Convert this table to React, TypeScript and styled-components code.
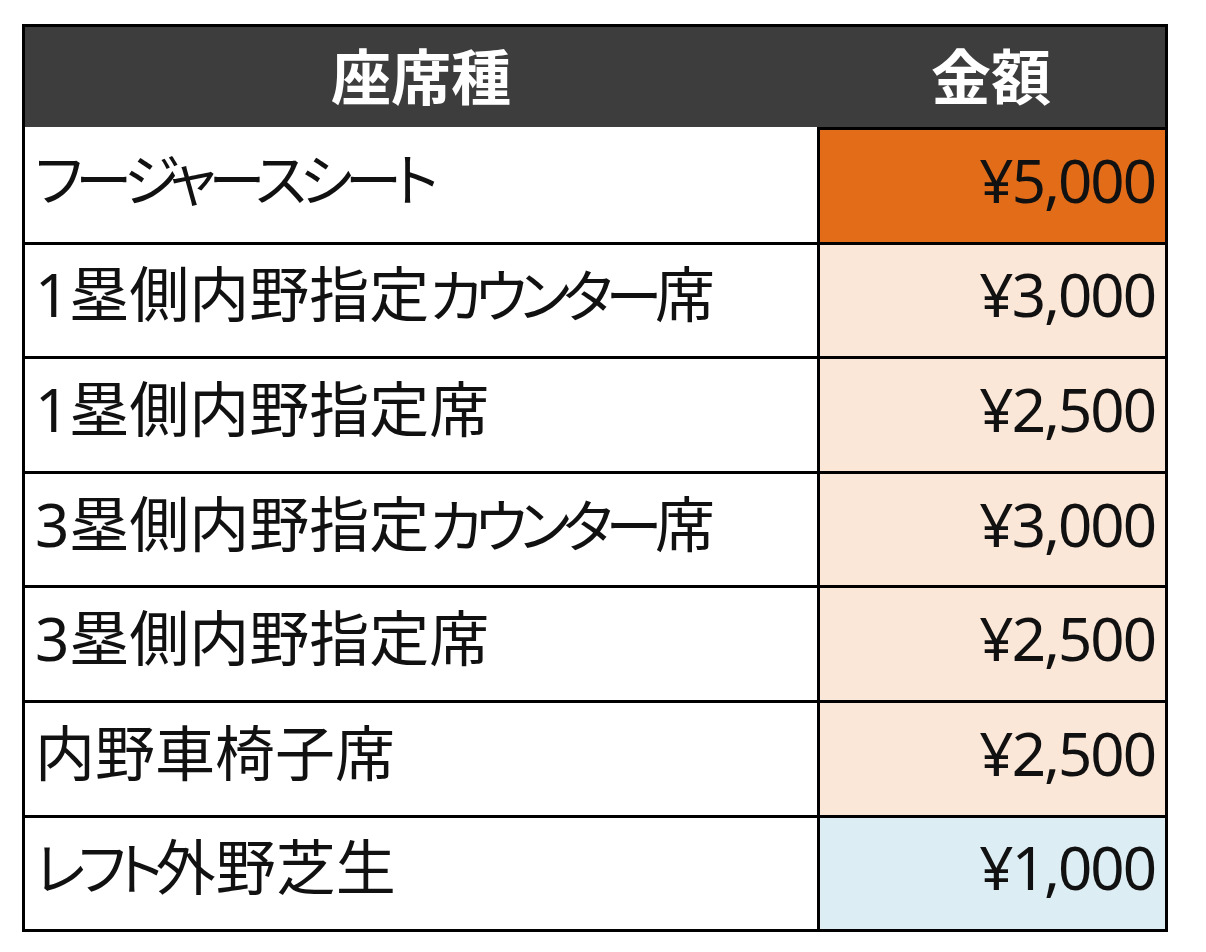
import React from 'react';
import styled, { createGlobalStyle } from 'styled-components';

const GlobalStyle = createGlobalStyle`
  body {
    margin: 0;
    background: #ffffff;
    font-family: 'Noto Sans', 'Noto Sans CJK JP', sans-serif;
  }
`;

const Page = styled.main`
  padding: 24px 0 0 22px;
`;

const Table = styled.div`
  display: grid;
  grid-template-columns: 792px 348px;
  width: max-content;
  border: 3px solid #000;
`;

const HeadCell = styled.div`
  height: 100px;
  background: #3d3d3d;
  color: #fff;
  font-weight: 700;
  font-size: 60px;
  display: flex;
  align-items: center;
  justify-content: center;
  padding-bottom: 6px;
  box-sizing: border-box;
`;

const NameCell = styled.div<{ $first?: boolean }>`
  height: 114.6px;
  box-sizing: border-box;
  border-top: ${(p) => (p.$first ? 'none' : '3px solid #000')};
  display: flex;
  align-items: center;
  padding: 0 0 12px 10px;
  font-size: 60px;
  color: #111;
  white-space: nowrap;
  font-feature-settings: 'palt';
`;

const Label = styled.span`
  line-height: 1.2;
`;

// katakana in the sheet font are a bit smaller and proportionally set
const Kana = styled.span`
  font-size: 57px;
  letter-spacing: -7px;
`;

const ValueCell = styled.div<{ $bg: string }>`
  height: 114.6px;
  box-sizing: border-box;
  border-top: 3px solid #000;
  border-left: 3px solid #000;
  background: ${(p) => p.$bg};
  display: flex;
  align-items: center;
  justify-content: flex-end;
  padding: 0 10px 12px 0;
  font-size: 60px;
  letter-spacing: -2px;
  color: #111;
`;

const rows = [
  { name: 'フージャースシート', price: '¥5,000', bg: '#e36c19' },
  { name: '1塁側内野指定カウンター席', price: '¥3,000', bg: '#fbe7d8' },
  { name: '1塁側内野指定席', price: '¥2,500', bg: '#fbe7d8' },
  { name: '3塁側内野指定カウンター席', price: '¥3,000', bg: '#fbe7d8' },
  { name: '3塁側内野指定席', price: '¥2,500', bg: '#fbe7d8' },
  { name: '内野車椅子席', price: '¥2,500', bg: '#fbe7d8' },
  { name: 'レフト外野芝生', price: '¥1,000', bg: '#dcedf3' },
];

const renderName = (name: string) =>
  name
    .split(/([\u30A0-\u30FF]+)/)
    .filter(Boolean)
    .map((part, i) => (/^[\u30A0-\u30FF]+$/.test(part) ? <Kana key={i}>{part}</Kana> : part));

export default function App() {
  return (
    <Page>
      <GlobalStyle />
      <Table>
        <HeadCell>座席種</HeadCell>
        <HeadCell>金額</HeadCell>
        {rows.map((r, i) => (
          <React.Fragment key={i}>
            <NameCell $first={i === 0}>
              <Label>{renderName(r.name)}</Label>
            </NameCell>
            <ValueCell $bg={r.bg}>{r.price}</ValueCell>
          </React.Fragment>
        ))}
      </Table>
    </Page>
  );
}
